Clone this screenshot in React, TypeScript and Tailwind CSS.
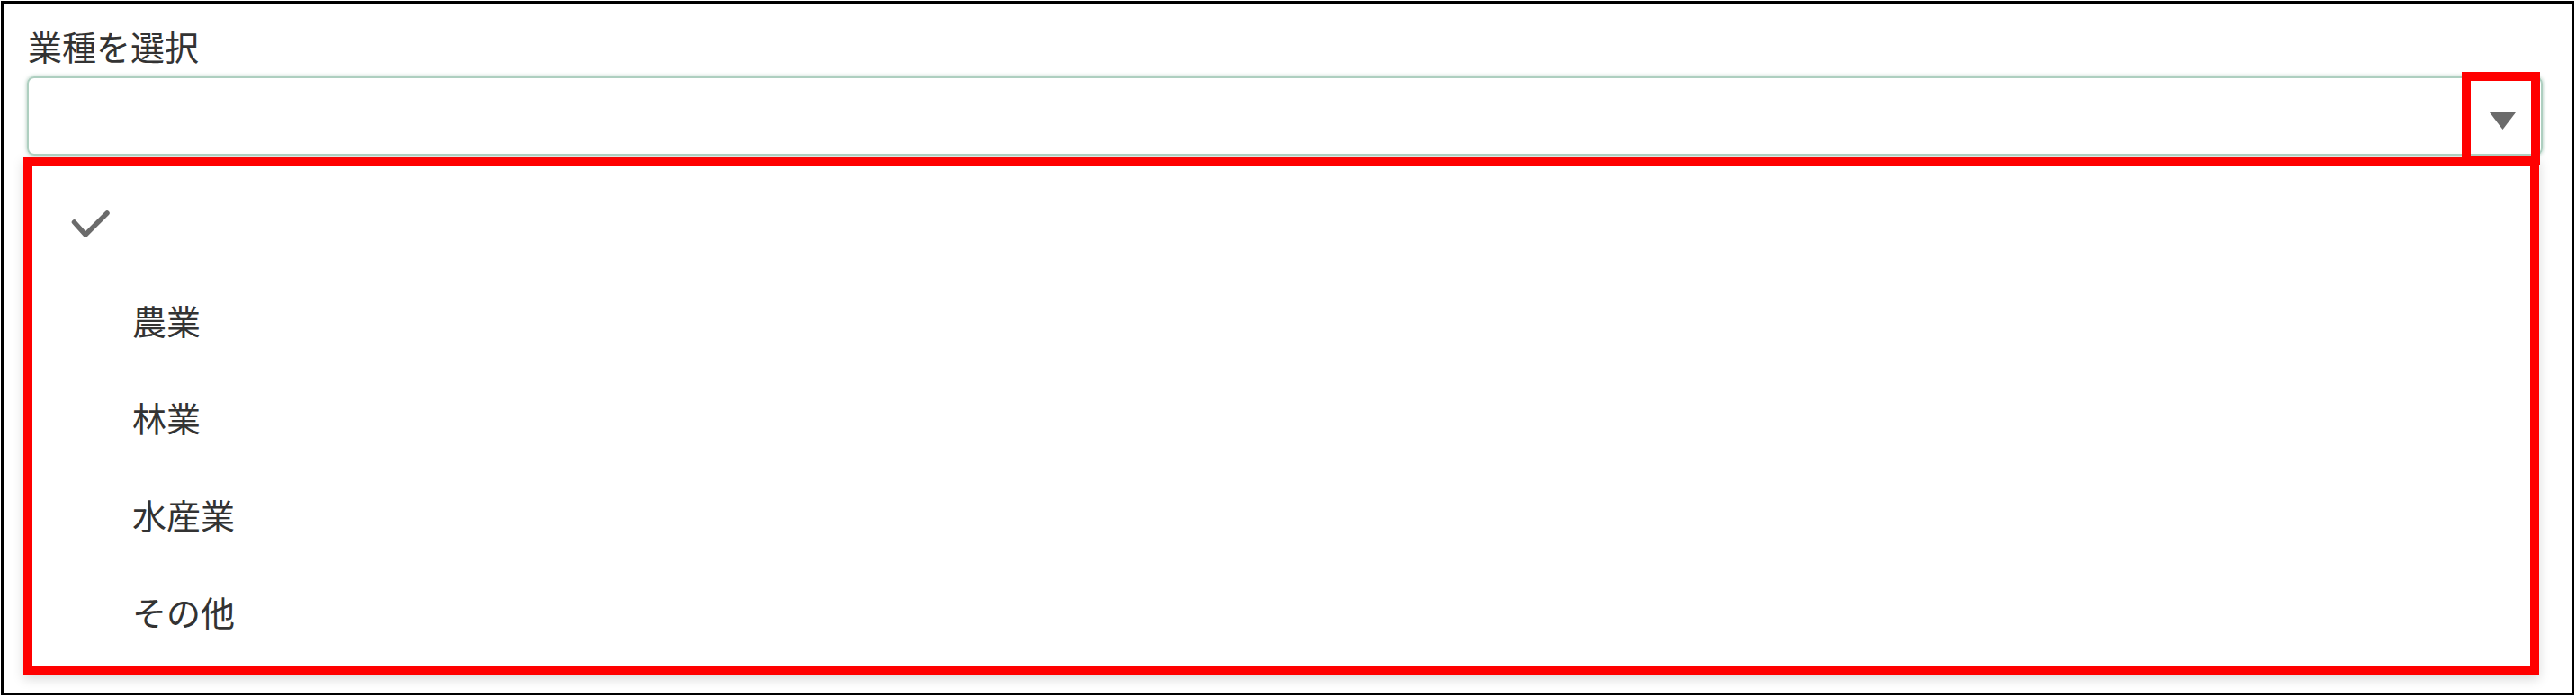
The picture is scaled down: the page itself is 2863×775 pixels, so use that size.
import React from 'react';

const options = ['農業', '林業', '水産業', 'その他'];

export default function App() {
  return (
    <div className="w-[2863px] h-[775px] bg-white pl-px pt-px font-['Noto_Sans_CJK_JP','Noto_Sans',sans-serif] text-[#333]">
      <div className="w-[2860px] h-[772px] border-[3px] border-black bg-white flex flex-col pt-[28px]">
        <label className="ml-[27px] text-[38px] leading-[38px]">業種を選択</label>

        {/* select box */}
        <div className="relative ml-[26px] mt-[15px] w-[2796px] h-[88px] rounded-[8px] border-2 border-[#aecfc0] shadow-[0_0_4px_rgba(90,150,120,0.55)] flex items-center justify-end pr-[28px] pt-[10px]">
          <svg width="29" height="19" viewBox="0 0 29 19">
            <polygon points="0,0 29,0 14.5,19" fill="#6b6b6b" />
          </svg>
          <div className="absolute left-[2704px] top-[-7px] w-[87px] h-[104px] border-[10px] border-[#ff0000]" />
        </div>

        {/* dropdown list */}
        <div className="ml-[22px] mt-[2px] w-[2796px] h-[576px] border-[10px] border-[#ff0000] bg-white shadow-[0_4px_12px_rgba(0,0,0,0.15)] pt-[9px] pb-[7px] flex flex-col">
          <div className="h-[108px] flex items-center pl-[36px]">
            <svg width="57" height="57" viewBox="0 0 57 57">
              <polyline
                points="10.5,27 23,41 47,17"
                fill="none"
                stroke="#6b6b6b"
                strokeWidth="5.5"
                strokeLinecap="round"
                strokeLinejoin="round"
              />
            </svg>
          </div>
          {options.map((o) => (
            <div key={o} className="h-[108px] flex items-center pl-[111px] text-[38px] leading-[38px]">
              {o}
            </div>
          ))}
        </div>
      </div>
    </div>
  );
}
